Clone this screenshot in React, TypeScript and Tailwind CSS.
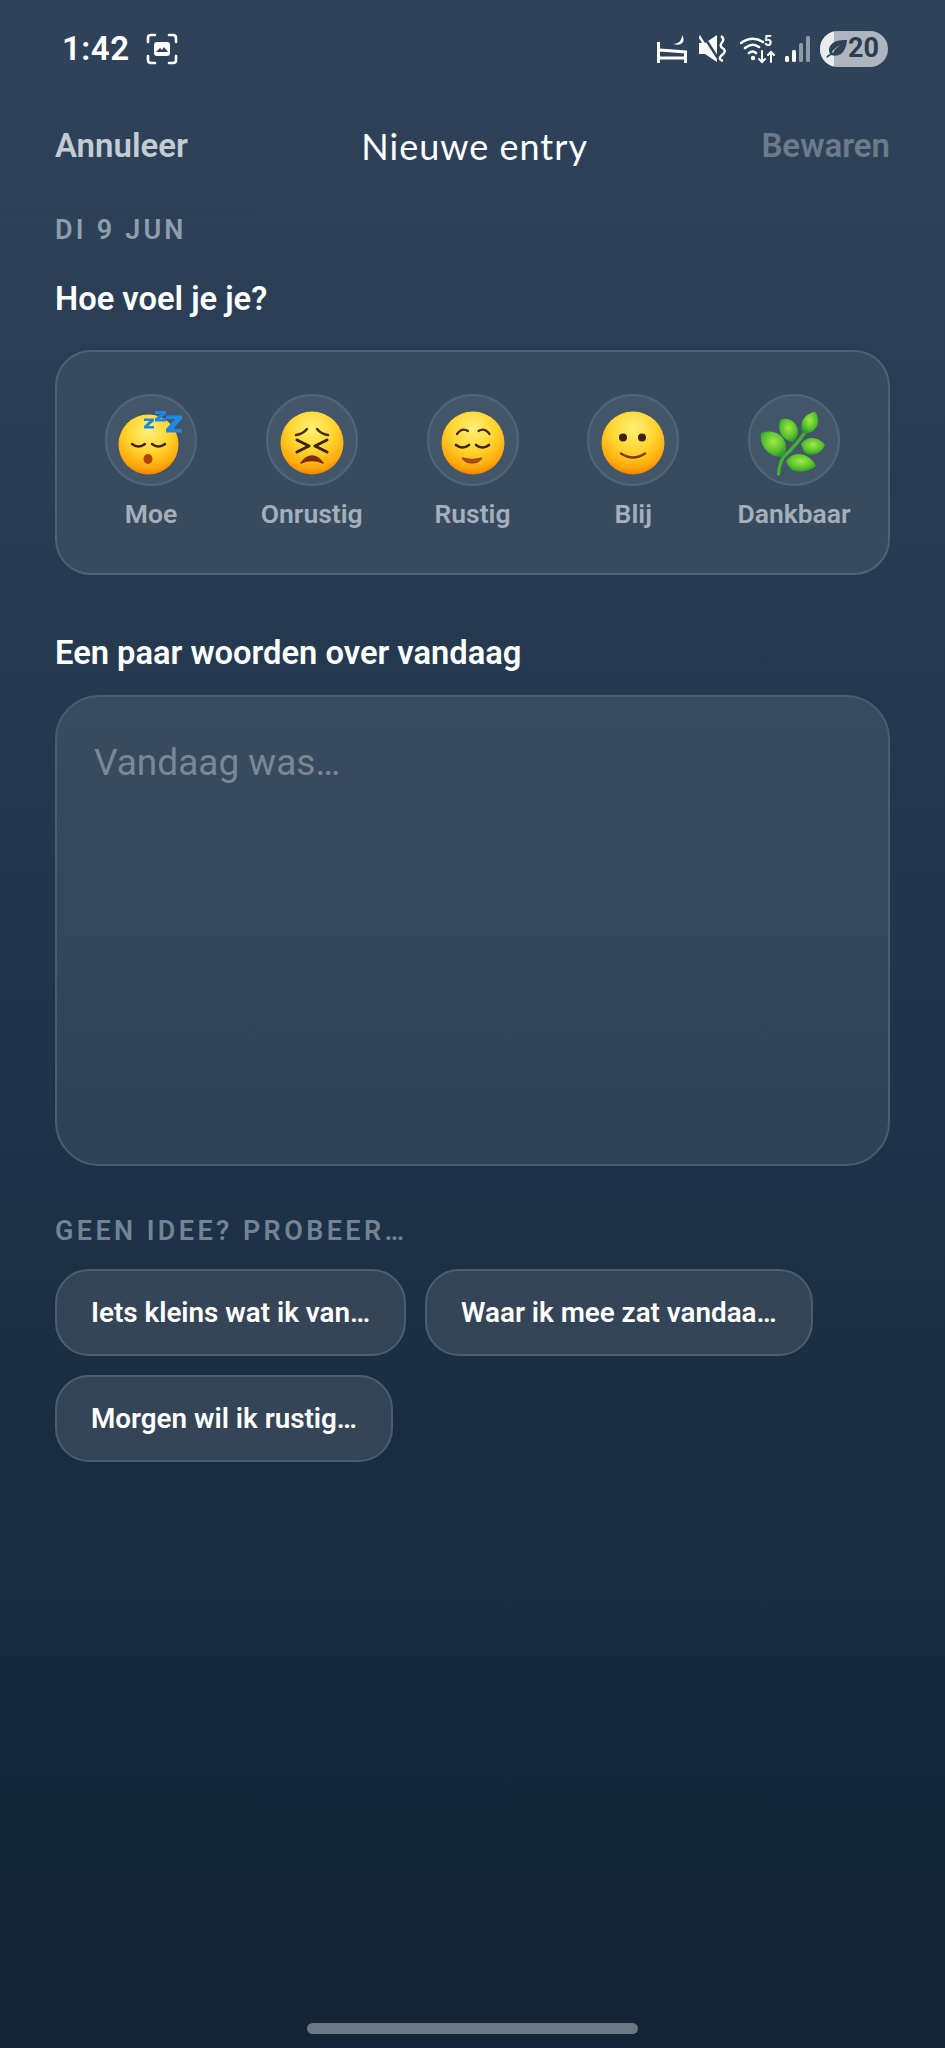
const moods = [
  {
    label: "Moe",
    icon: (
      <>
        <circle cx="29.500" cy="33.500" r="30" fill="url(#face)" />
        <path d="M13 33q6.500 5 13 0M33 33q6.500 5 13 0" fill="none" stroke="#3b2206" strokeWidth="2.400" strokeLinecap="round" />
        <ellipse cx="29" cy="48" rx="4.500" ry="5" fill="#b5400c" />
        <path d="M25 7.500h10V10l-5.500 5h5.500v2.500H25V15l5.500-5H25zM36 0h11v3l-6 4.500h6v3H36v-3l6-4.500h-6zM47 4.500h16V8l-9 10h9v3.500H47V18l9-10h-9z" fill="#1e88e5" />
      </>
    ),
  },
  {
    label: "Onrustig",
    icon: (
      <>
        <circle cx="32" cy="32" r="31.500" fill="url(#face)" />
        <path d="M16 24q7-1 11-6M48 24q-7-1-11-6" fill="none" stroke="#4a2a08" strokeWidth="2.400" strokeLinecap="round" />
        <path d="M17 29l12 6-12 6M47 29l-12 6 12 6" fill="none" stroke="#3b2206" strokeWidth="3" strokeLinecap="round" strokeLinejoin="round" />
        <path d="M21 52q11-14 22 0q-11-5-22 0z" fill="#7b2d0a" stroke="#7b2d0a" strokeWidth="1.500" strokeLinejoin="round" />
      </>
    ),
  },
  {
    label: "Rustig",
    icon: (
      <>
        <circle cx="32" cy="32" r="31.500" fill="url(#face)" />
        <path d="M16 23q5-7 11-3M37.500 20q6-4 11 3" fill="none" stroke="#4a2a08" strokeWidth="2.200" strokeLinecap="round" />
        <path d="M15 34q6.500 5 13 0M35 34q6.500 5 13 0" fill="none" stroke="#3b2206" strokeWidth="2.600" strokeLinecap="round" />
        <path d="M21 47q10 3 20 0q-3 5-10 5t-10-5z" fill="#b8480f" stroke="#7b3a0a" strokeWidth="1" strokeLinejoin="round" />
      </>
    ),
  },
  {
    label: "Blij",
    icon: (
      <>
        <circle cx="32" cy="32" r="31.500" fill="url(#face)" />
        <circle cx="22" cy="26.500" r="4" fill="#3b2206" />
        <circle cx="41" cy="26.500" r="4" fill="#3b2206" />
        <path d="M20 42.500q12 8 24 0" fill="none" stroke="#7b3a0a" strokeWidth="2.400" strokeLinecap="round" />
      </>
    ),
  },
  {
    label: "Dankbaar",
    icon: (
      <>
        <path d="M16.500 63q1-12 6-18q11-10 20-23" fill="none" stroke="#46ad35" strokeWidth="3.400" strokeLinecap="round" />
        <path d="M20 46C5 46-3 33-1 22C12 17 24 25 24 36C24 40 23 43 20 46z" fill="url(#leaf)" />
        <path d="M31 31C19 29 15 19 18 9C27 5 36 12 36 21C36 25 34 28 31 31z" fill="url(#leaf)" />
        <path d="M41 22C36 13 42 3 53 .5C58 8 57 15 51 20C47 22 44 23 41 22z" fill="url(#leaf)" />
        <path d="M39 33C44 25 56 25 63 34C59 43 49 46 43 42C41 39 40 36 39 33z" fill="url(#leaf)" />
        <path d="M24 50C31 39 47 41 54 55C46 62 35 62 29 58C27 56 25 53 24 50z" fill="url(#leaf)" />
      </>
    ),
  },
];

const prompts = ["Iets kleins wat ik van…", "Waar ik mee zat vandaa…", "Morgen wil ik rustig…"];

function StatusBar() {
  return (
    <div className="flex items-center justify-between h-[97px] pl-[62px] pr-[57px]">
      <div className="flex items-center gap-[16px] text-white">
        <span className="text-[33px] leading-none font-semibold tracking-[0.5px]">1:42</span>
        <svg width="32" height="32" viewBox="0 0 32 32" fill="none" stroke="#fff" strokeWidth="2.600" strokeLinecap="round">
          <path d="M2 9V5q0-3 3-3h4M23 2h4q3 0 3 3v4M30 23v4q0 3-3 3h-4M9 30H5q-3 0-3-3v-4" />
          <rect x="8" y="9" width="16" height="14" rx="3" fill="#fff" stroke="none" />
          <path d="M10 19l4-4 2 2 2-3 4 5z" fill="#2e4259" stroke="none" />
        </svg>
      </div>
      <div className="flex items-center text-white">
        <svg className="mr-[12px]" width="30" height="28" viewBox="0 0 30 28" fill="none" stroke="#fff" strokeWidth="3">
          <path d="M1.500 7v21M3 23h25.500M28.500 28V17L3 15" />
          <path d="M25 0c4 6 0 12-9 9c6 0 9-4 9-9z" fill="#fff" stroke="none" />
        </svg>
        <svg className="mr-[14px]" width="27" height="27" viewBox="0 0 27 27" fill="#fff">
          <path d="M0 8h6l12-8v27l-12-8H0z" />
          <path d="M4 0l16 25" fill="none" stroke="#2e4259" strokeWidth="2.400" />
          <path d="M0 1l14 22" fill="none" stroke="#fff" strokeWidth="2.400" />
          <path d="M22 1q4 3 1 6.500t1 6t-1 6.500t1 6" fill="none" stroke="#fff" strokeWidth="2.400" />
        </svg>
        <svg className="mr-[9px]" width="36" height="30" viewBox="0 0 36 30" fill="none" stroke="#fff" strokeWidth="2.600" strokeLinecap="round">
          <path d="M1 9q11-8 22-1M5 14q7-6 14-1M9 19q3.500-3 7 0" />
          <circle cx="13" cy="24" r="2.200" fill="#fff" stroke="none" />
          <path d="M22 17v11m-3-3l3 3 3-3M31 28V18m-3 3l3-3 3 3" strokeWidth="2" />
          <text x="24" y="12" fontSize="14" fontWeight="700" fill="#fff" stroke="none" fontFamily="Roboto, sans-serif">5</text>
        </svg>
        <svg className="mr-[10px]" width="25" height="28" viewBox="0 0 25 28">
          <rect x="0" y="21" width="4" height="6" rx="1.500" fill="#fff" />
          <rect x="7" y="15" width="4" height="12" rx="1.500" fill="#fff" />
          <rect x="14" y="8" width="4" height="19" rx="1.500" fill="#8d9aa8" />
          <rect x="21" y="1" width="4" height="26" rx="1.500" fill="#8d9aa8" />
        </svg>
        <div className="relative flex items-center justify-end w-[68px] h-[36px] rounded-full bg-[#aeb5be] overflow-hidden pr-[9px]">
          <div className="absolute left-0 top-0 bottom-0 w-[14px] bg-[#e9ecef]" />
          <svg className="absolute left-[6px] top-[8px]" width="22" height="20" viewBox="0 0 22 20" fill="#2e4259">
            <path d="M21 1Q8 0 4 7q-2 4 0 8Q-1 17 1 19q1-1 4-3 5 2 10-1 5-4 6-14zM6 13q3-5 9-7-6 3-8 8z" />
          </svg>
          <span className="relative text-[27px] leading-none font-bold text-[#2a3d52]">20</span>
        </div>
      </div>
    </div>
  );
}

export default function App() {
  return (
    <div className="relative h-[2048px] overflow-hidden bg-gradient-to-b from-[#2f445b] via-[#1f344b] to-[#122435] font-['Roboto',sans-serif]">
      <svg width="0" height="0" className="absolute">
        <defs>
          <radialGradient id="face" cx="50%" cy="28%" r="72%">
            <stop offset="0%" stopColor="#fff07a" />
            <stop offset="50%" stopColor="#ffd42e" />
            <stop offset="85%" stopColor="#fda90a" />
            <stop offset="100%" stopColor="#ee8400" />
          </radialGradient>
          <radialGradient id="leaf" cx="50%" cy="40%" r="62%">
            <stop offset="0%" stopColor="#a2e84a" />
            <stop offset="60%" stopColor="#5cc42e" />
            <stop offset="100%" stopColor="#259a24" />
          </radialGradient>
        </defs>
      </svg>
      <StatusBar />

      <div className="px-[55px]">
        {/* Header */}
        <div className="flex items-center justify-between h-[66px] mt-[16px]">
          <button className="text-[33px] font-semibold text-[#c5cbd2]">Annuleer</button>
          <h1 className="text-[36px] font-['Lato',sans-serif] text-white tracking-[1px]">Nieuwe entry</h1>
          <button className="text-[33px] font-semibold text-[#6c7b8a]">Bewaren</button>
        </div>

        <p className="mt-[36px] text-[27px] leading-[30px] font-semibold tracking-[3.200px] text-[#8f9cab]">DI 9 JUN</p>
        <h2 className="mt-[36px] text-[32.700px] leading-[36px] font-semibold text-white">Hoe voel je je?</h2>

        {/* Mood picker */}
        <div className="flex justify-between mt-[33px] h-[225px] rounded-[36px] border-2 border-[#4e6276] bg-[#384b5e] pt-[42px] px-[34px]">
          {moods.map((mood) => (
            <div key={mood.label} className="flex flex-col items-center w-[120px]">
              <div className="flex items-center justify-center w-[92px] h-[92px] rounded-full border-2 border-[#51647a] bg-[#435669]">
                <svg className="overflow-visible translate-y-[3px]" width="64" height="64" viewBox="0 0 64 64">
                  {mood.icon}
                </svg>
              </div>
              <span className="mt-[11px] text-[26.500px] leading-[34px] font-semibold text-[#a4afbc] whitespace-nowrap">{mood.label}</span>
            </div>
          ))}
        </div>

        <h2 className="mt-[60px] text-[32.700px] leading-[36px] font-semibold text-white">Een paar woorden over vandaag</h2>

        <div className="mt-[24px] h-[471px] rounded-[44px] border-2 border-[#495d71] bg-gradient-to-b from-[#394c5f] to-[#2f4256] px-[37px] pt-[44px]">
          <span className="text-[37px] leading-[44px] text-[#7a8896]">Vandaag was…</span>
        </div>

        <p className="mt-[50px] text-[27px] leading-[30px] font-semibold tracking-[3.400px] text-[#748394]">GEEN IDEE? PROBEER…</p>

        <div className="flex flex-wrap gap-x-[19px] gap-y-[19px] mt-[23px]">
          {prompts.map((prompt) => (
            <button
              key={prompt}
              className="h-[87px] rounded-[34px] border-2 border-[#4b5e71] bg-[#344557] px-[34px] text-[27.800px] font-semibold text-white whitespace-nowrap"
            >
              {prompt}
            </button>
          ))}
        </div>
      </div>

      {/* Home indicator */}
      <div className="absolute left-[307px] top-[2023px] w-[331px] h-[11px] rounded-full bg-[#6b7784]" />
    </div>
  );
}
